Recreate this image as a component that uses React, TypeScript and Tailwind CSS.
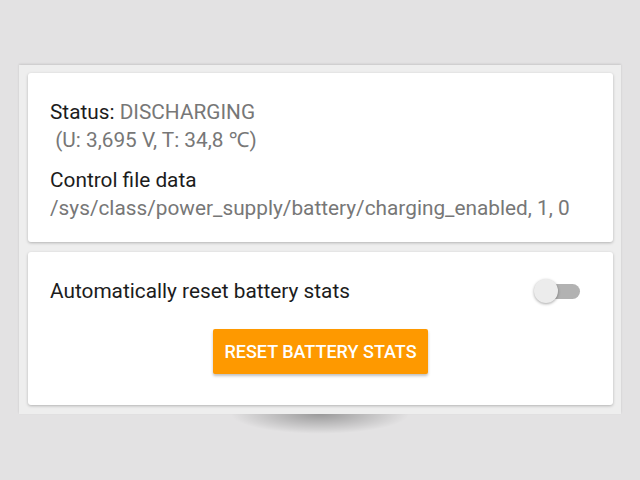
import React from "react";

function Toggle() {
  return (
    <div className="relative h-[24px] w-[46px] shrink-0">
      <div className="absolute right-0 top-[5px] h-[15px] w-[40px] rounded-full bg-[#b2b2b2]" />
      <div className="absolute left-0 top-0 h-[24px] w-[24px] rounded-full bg-[#ececec] shadow-[0_1px_3px_rgba(0,0,0,0.35)]" />
    </div>
  );
}

export default function App() {
  return (
    <div
      className="h-[480px] w-[640px] overflow-hidden bg-[#e3e2e3] pt-[65px]"
      style={{ fontFamily: "Roboto, 'Noto Sans', sans-serif" }}
    >
      <div className="mx-[19px] flex flex-col gap-[10px] bg-[#eeeeee] pb-[9px] pl-[9px] pr-[8px] pt-[8px] shadow-[0_-1px_2px_rgba(0,0,0,0.12)]">
        {/* status card */}
        <div className="h-[169px] rounded-[3px] bg-white pl-[22px] pt-[25px] text-[20.8px] leading-[28px] shadow-[0_1px_3px_rgba(0,0,0,0.25)]">
          <div>
            <span className="text-[#1c1c1c]">Status: </span>
            <span className="text-[#777777]">DISCHARGING</span>
          </div>
          <div className="whitespace-pre text-[#777777]"> (U: 3,695 V, T: 34,8 ℃)</div>
          <div className="mt-[12px] text-[#1c1c1c]">Control file data</div>
          <div className="text-[#777777]">/sys/class/power_supply/battery/charging_enabled, 1, 0</div>
        </div>

        {/* reset card */}
        <div className="flex h-[153px] flex-col rounded-[3px] bg-white pl-[22px] pr-[33px] pt-[25px] shadow-[0_1px_3px_rgba(0,0,0,0.25)]">
          <div className="flex items-center justify-between text-[20.8px] leading-[28px] text-[#1c1c1c]">
            <span>Automatically reset battery stats</span>
            <Toggle />
          </div>
          <div className="mt-[24px] flex justify-center pl-[11px]">
            <button className="h-[45px] w-[215px] rounded-[2px] bg-[#fe9900] text-[18px] font-medium text-white shadow-[0_2px_3px_rgba(0,0,0,0.25)]">
              RESET BATTERY STATS
            </button>
          </div>
        </div>
      </div>
      <div className="mx-auto h-[20px] w-[180px] bg-[radial-gradient(ellipse_at_top,rgba(0,0,0,0.32),transparent_70%)]" />
    </div>
  );
}
